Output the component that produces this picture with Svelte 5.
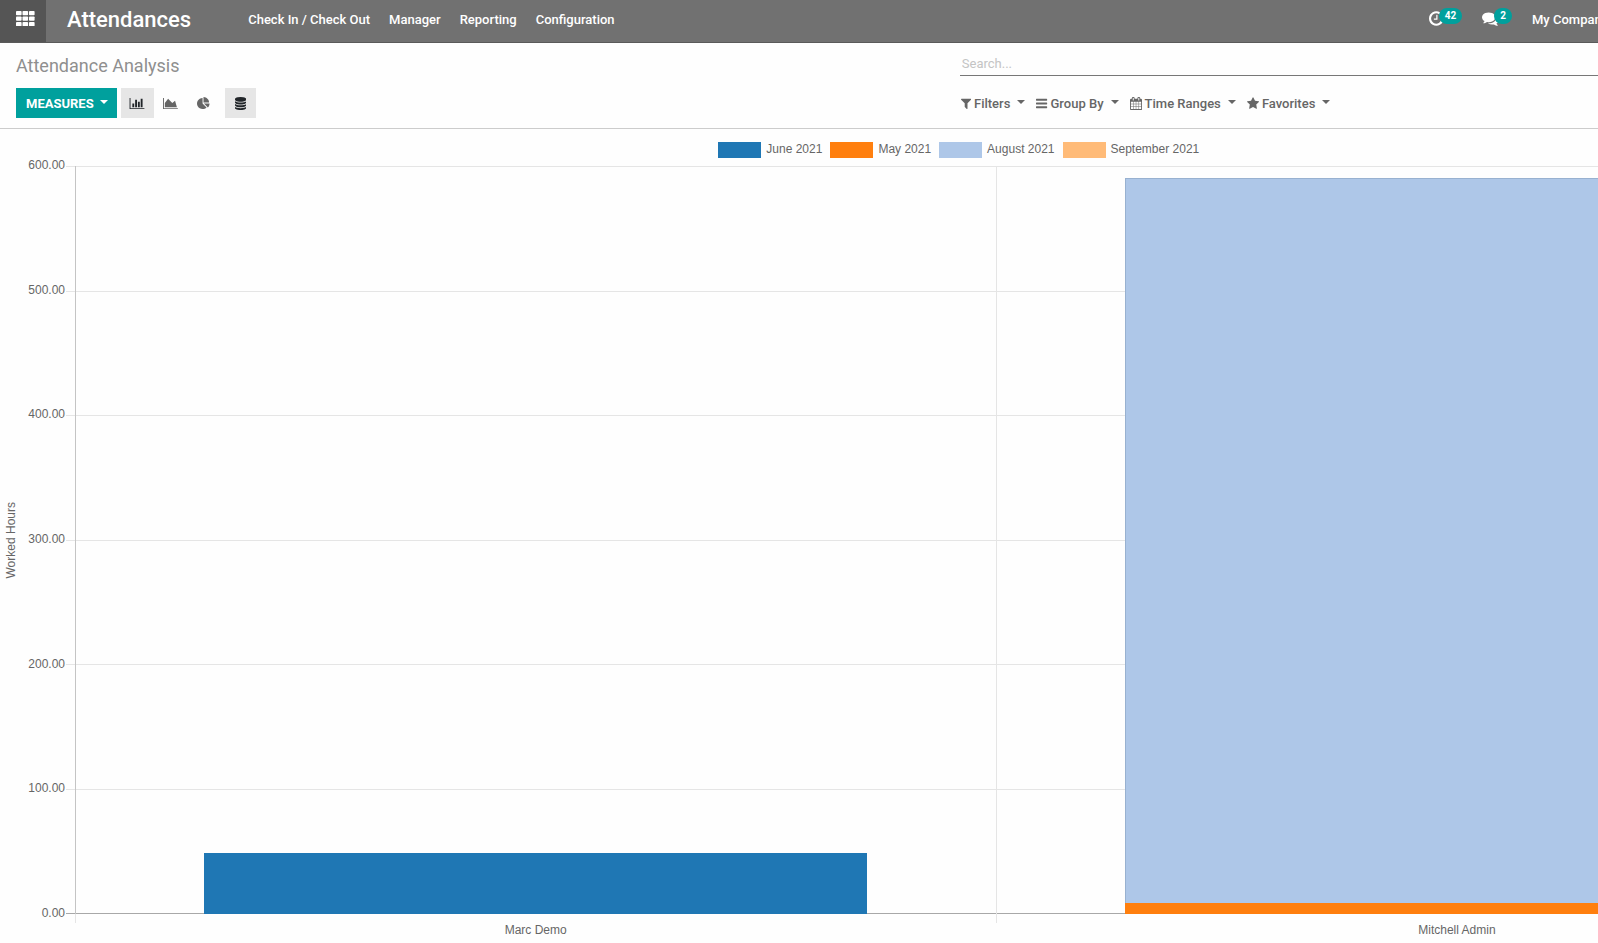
<script>
  const menus = ['Check In / Check Out', 'Manager', 'Reporting', 'Configuration'];

  const icons = {
    bar: {
      box: '0 0 2048 1792',
      d: 'M640 896v512h-256v-512h256zm384-512v1024h-256v-1024h256zm1024 1152v128h-2048v-1536h128v1408h1920zm-640-896v768h-256v-768h256zm384-384v1152h-256v-1152h256z'
    },
    area: {
      box: '0 0 2048 1792',
      d: 'M2048 1536v128h-2048v-1536h128v1408h1920zm-384-1024l256 896h-1664v-576l448-576 576 576z'
    },
    pie: {
      box: '0 0 1792 1792',
      d: 'M768 890l546 546q-106 108-247.500 168t-298.500 60q-209 0-385.500-103t-279.500-279.500-103-385.500 103-385.500 279.500-279.500 385.500-103v762zm187 6h773q0 157-60 298.500t-168 247.500zm709-128h-768v-768q209 0 385.500 103t279.500 279.500 103 385.500z'
    },
    database: {
      box: '128 0 1536 1792',
      d: 'M896 768q237 0 443-43t325-127v170q0 69-103 128t-280 93.500-385 34.500-385-34.500-280-93.500-103-128v-170q119 84 325 127t443 43zm0 768q237 0 443-43t325-127v170q0 69-103 128t-280 93.500-385 34.500-385-34.500-280-93.500-103-128v-170q119 84 325 127t443 43zm0-384q237 0 443-43t325-127v170q0 69-103 128t-280 93.500-385 34.500-385-34.500-280-93.500-103-128v-170q119 84 325 127t443 43zm0-1152q208 0 385 34.500t280 93.500 103 128v128q0 69-103 128t-280 93.500-385 34.500-385-34.500-280-93.500-103-128v-128q0-69 103-128t280-93.500 385-34.500z'
    },
    filter: {
      box: '192 0 1408 1792',
      d: 'M1595 295q17 41-14 70l-493 493v742q0 42-39 59-13 5-25 5-27 0-45-19l-256-256q-19-19-19-45v-486l-493-493q-31-29-14-70 17-39 59-39h1280q42 0 59 39z'
    },
    bars: {
      box: '128 0 1536 1792',
      d: 'M1664 1344v128q0 26-19 45t-45 19h-1408q-26 0-45-19t-19-45v-128q0-26 19-45t45-19h1408q26 0 45 19t19 45zm0-512v128q0 26-19 45t-45 19h-1408q-26 0-45-19t-19-45v-128q0-26 19-45t45-19h1408q26 0 45 19t19 45zm0-512v128q0 26-19 45t-45 19h-1408q-26 0-45-19t-19-45v-128q0-26 19-45t45-19h1408q26 0 45 19t19 45z'
    },
    calendar: {
      box: '64 0 1664 1792',
      d: 'M192 1664h288v-288h-288v288zm352 0h320v-288h-320v288zm-352-352h288v-320h-288v320zm352 0h320v-320h-320v320zm-352-384h288v-288h-288v288zm736 736h320v-288h-320v288zm-384-736h320v-288h-320v288zm768 736h288v-288h-288v288zm-384-352h320v-320h-320v320zm-352-864v-288q0-13-9.500-22.500t-22.500-9.500h-64q-13 0-22.500 9.500t-9.500 22.500v288q0 13 9.500 22.500t22.500 9.500h64q13 0 22.500-9.500t9.500-22.500zm736 864h288v-320h-288v320zm-384-384h320v-288h-320v288zm384 0h288v-288h-288v288zm32-480v-288q0-13-9.500-22.500t-22.500-9.500h-64q-13 0-22.500 9.500t-9.500 22.500v288q0 13 9.500 22.500t22.500 9.500h64q13 0 22.500-9.500t9.500-22.500zm384-64v1280q0 52-38 90t-90 38h-1408q-52 0-90-38t-38-90v-1280q0-52 38-90t90-38h128v-96q0-66 47-113t113-47h64q66 0 113 47t47 113v96h384v-96q0-66 47-113t113-47h64q66 0 113 47t47 113v96h128q52 0 90 38t38 90z'
    },
    star: {
      box: '64 0 1664 1792',
      d: 'M1728 647q0 22-26 48l-363 354 86 500q1 7 1 20 0 21-10.500 35.500t-30.500 14.500q-19 0-40-12l-449-236-449 236q-22 12-40 12-21 0-31.500-14.500t-10.500-35.500q0-6 2-20l86-500-364-354q-25-27-25-48 0-37 56-46l502-73 225-455q19-41 49-41t49 41l225 455 502 73q56 9 56 46z'
    },
    clock: {
      box: '128 0 1536 1792',
      d: 'M1024 544v448q0 14-9 23t-23 9h-320q-14 0-23-9t-9-23v-64q0-14 9-23t23-9h224v-352q0-14 9-23t23-9h64q14 0 23 9t9 23zm416 352q0-148-73-273t-198-198-273-73-273 73-198 198-73 273 73 273 198 198 273 73 273-73 198-198 73-273zm224 0q0 209-103 385.500t-279.500 279.500-385.500 103-385.500-103-279.500-279.500-103-385.500 103-385.500 279.500-279.500 385.500-103 385.500 103 279.500 279.500 103 385.500z'
    },
    comments: {
      box: '0 0 1792 1792',
      d: 'M1408 768q0 139-94 257t-256.500 186.500-353.500 68.500q-86 0-176-16-124 88-278 128-36 9-86 16h-3q-11 0-20.500-8t-11.500-21q-1-3-1-6.500t.5-6.500 2-6l2.500-5 3.500-5.500 4-5 4.500-5 4-4.500q5-6 23-25t26-29.500 22.500-29 25-38.500 20.500-44q-124-72-195-177t-71-224q0-139 94-257t256.500-186.500 353.500-68.500 353.500 68.500 256.500 186.500 94 257zm384 256q0 120-71 224.500t-195 176.500q10 24 20.500 44t25 38.500 22.500 29 26 29.500 23 25q1 1 4 4.500t4.500 5 4 5 3.500 5.500l2.500 5 2 6 .5 6.500-1 6.500q-3 14-13 22t-22 7q-50-7-86-16-154-40-278-128-90 16-176 16-271 0-472-132 58 4 88 4 161 0 309-45t264-129q125-92 192-212t67-254q0-77-23-152 129 71 204 178t75 230z'
    }
  };

  const modes = [
    { id: 'bar', label: 'Bar Chart' },
    { id: 'area', label: 'Line Chart' },
    { id: 'pie', label: 'Pie Chart' }
  ];

  const filters = [
    { icon: 'filter', label: 'Filters' },
    { icon: 'bars', label: 'Group By' },
    { icon: 'calendar', label: 'Time Ranges' },
    { icon: 'star', label: 'Favorites' }
  ];

  const series = [
    { key: 'june', label: 'June 2021' },
    { key: 'may', label: 'May 2021' },
    { key: 'august', label: 'August 2021' },
    { key: 'september', label: 'September 2021' }
  ];

  const maxHours = 600;
  const ticks = [600, 500, 400, 300, 200, 100, 0];

  // stacks are listed from top to bottom
  const employees = [
    { name: 'Marc Demo', stack: [{ key: 'june', hours: 49 }] },
    {
      name: 'Mitchell Admin',
      stack: [
        { key: 'august', hours: 581 },
        { key: 'may', hours: 9 }
      ]
    }
  ];

  let mode = $state('bar');
  let stacked = $state(true);
  let search = $state('');
</script>

{#snippet icon(name)}
  <svg class="icon {name}" viewBox={icons[name].box} aria-hidden="true">
    <path d={icons[name].d} />
  </svg>
{/snippet}

<div class="client">
  <header class="navbar">
    <button class="apps" aria-label="Applications">
      <svg viewBox="0 0 19 15" aria-hidden="true">
        {#each [0, 5.5, 11] as y}
          {#each [0, 6.5, 13] as x}
            <rect {x} {y} width="5.6" height="4.2" rx="0.8" />
          {/each}
        {/each}
      </svg>
    </button>
    <a class="brand" href="#attendances">Attendances</a>
    <nav class="menus">
      {#each menus as menu}
        <a href="#menu">{menu}</a>
      {/each}
    </nav>
    <div class="systray">
      <button class="tray" aria-label="Activities">
        {@render icon('clock')}
        <span class="badge">42</span>
      </button>
      <button class="tray" aria-label="Conversations">
        {@render icon('comments')}
        <span class="badge">2</span>
      </button>
      <button class="company">My Company</button>
    </div>
  </header>

  <div class="page">
    <section class="panel">
      <div class="left">
        <h1>Attendance Analysis</h1>
        <div class="buttons">
          <button class="measures">MEASURES <i class="caret"></i></button>
          <div class="modes">
            {#each modes as m}
              <button
                class="tool"
                class:active={mode === m.id}
                aria-label={m.label}
                onclick={() => (mode = m.id)}
              >
                {@render icon(m.id)}
              </button>
            {/each}
          </div>
          <button
            class="tool stacked"
            class:active={stacked}
            aria-label="Stacked"
            onclick={() => (stacked = !stacked)}
          >
            {@render icon('database')}
          </button>
        </div>
      </div>
      <div class="right">
        <input type="text" placeholder="Search..." aria-label="Search" bind:value={search} />
        <div class="filters">
          {#each filters as f}
            <button>
              {@render icon(f.icon)}
              <span>{f.label}</span>
              <i class="caret"></i>
            </button>
          {/each}
        </div>
      </div>
    </section>

    <section class="chart">
      <ul class="legend">
        {#each series as s}
          <li><span class="swatch {s.key}"></span>{s.label}</li>
        {/each}
      </ul>

      <div class="graph">
        <div class="axis-title"><span>Worked Hours</span></div>
        <div class="scale">
          {#each ticks as tick}
            <span>{tick.toFixed(2)}</span>
          {/each}
        </div>
        <div class="plot">
          <div class="lines">
            {#each ticks as tick}
              <span></span>
            {/each}
          </div>
          <div class="columns">
            {#each employees as employee}
              <div class="column">
                {#each employee.stack as part}
                  <div class="bar {part.key}" style="height: {(part.hours / maxHours) * 100}%"></div>
                {/each}
              </div>
            {/each}
          </div>
        </div>
      </div>

      <div class="names">
        {#each employees as employee}
          <div class="name">{employee.name}</div>
        {/each}
      </div>
    </section>
  </div>
</div>

<style>
  :global(body) {
    margin: 0;
    background: #fefefe;
  }

  .client {
    display: flex;
    flex-direction: column;
    height: 100vh;
    overflow: hidden;
    font-family: Roboto, 'Liberation Sans', sans-serif;
    font-size: 13px;
    color: #666;
  }

  button {
    margin: 0;
    padding: 0;
    border: 0;
    background: none;
    font: inherit;
    color: inherit;
    cursor: pointer;
  }

  a {
    color: inherit;
    text-decoration: none;
  }

  .icon {
    height: 13px;
    fill: currentColor;
    flex: none;
  }

  .caret {
    border-top: 4px solid;
    border-left: 4px solid transparent;
    border-right: 4px solid transparent;
  }

  /* top bar */
  .navbar {
    display: flex;
    flex: none;
    height: 42px;
    border-bottom: 1px solid #5a5a5a;
    background: #717171;
    color: #fff;
    font-weight: 500;
  }

  .apps {
    width: 46px;
    padding-bottom: 2px;
    padding-left: 4px;
    background: #555;
  }

  .apps svg {
    width: 19px;
    height: 15px;
    fill: #fff;
  }

  .brand {
    margin-left: 21px;
    font-size: 22px;
    line-height: 40px;
  }

  .menus {
    display: flex;
    gap: 19px;
    margin-left: 57px;
    line-height: 40px;
  }

  .systray {
    display: flex;
    align-items: flex-start;
    margin-left: auto;
    line-height: 40px;
  }

  .tray {
    display: flex;
    align-items: flex-start;
    margin-right: 20px;
  }

  .tray .icon {
    height: 17px;
    margin-top: 10px;
  }

  .badge {
    position: relative;
    height: 16px;
    margin-top: 8px;
    margin-left: -5px;
    padding: 0 6px;
    border-radius: 8px;
    background: #00a09d;
    font-size: 10px;
    font-weight: 700;
    line-height: 16px;
  }

  .company {
    width: 66px;
    overflow: hidden;
    line-height: 40px;
    text-align: left;
    white-space: nowrap;
  }

  /* the working area is wider than the window and runs off its right edge */
  .page {
    display: flex;
    flex: 1;
    flex-direction: column;
    width: 120%;
    min-height: 0;
  }

  .panel {
    display: flex;
    flex: none;
    border-bottom: 1px solid #ccc;
    padding-bottom: 10px;
  }

  .left,
  .right {
    width: 50%;
    box-sizing: border-box;
  }

  .left {
    padding-left: 16px;
  }

  h1 {
    margin: 11px 0;
    font-size: 18px;
    font-weight: 400;
    line-height: 23px;
    color: #8f8f8f;
  }

  .buttons {
    display: flex;
    height: 30px;
    gap: 4px;
  }

  .modes {
    display: flex;
    width: 100px;
  }

  .measures {
    display: flex;
    align-items: center;
    gap: 6px;
    padding: 0 9px 0 10px;
    background: #00a09d;
    color: #fff;
    font-weight: 700;
  }

  .measures .caret {
    margin-bottom: 3px;
  }

  .tool {
    display: flex;
    flex: 1;
    align-items: center;
    justify-content: center;
    color: #666;
  }

  .tool.active {
    background: #e6e6e6;
    color: #212529;
  }

  .tool.stacked {
    flex: none;
    width: 31px;
  }

  .right {
    padding-right: 16px;
    padding-left: 1px;
  }

  input {
    display: block;
    box-sizing: border-box;
    width: 100%;
    height: 24px;
    margin-top: 9px;
    padding: 0 2px;
    border: 0;
    border-bottom: 1px solid #777;
    outline: 0;
    background: none;
    font: inherit;
    color: #4c4c4c;
  }

  input::placeholder {
    color: #c4c4c4;
  }

  .filters {
    display: flex;
    gap: 11px;
    margin-top: 12px;
    padding-left: 1px;
    font-weight: 500;
  }

  .filters button {
    display: flex;
    align-items: center;
    height: 30px;
  }

  .filters span {
    margin-left: 3px;
  }

  .filters .caret {
    margin-bottom: 3px;
    margin-left: 7px;
  }

  /* chart */
  .chart {
    display: flex;
    flex: 1;
    flex-direction: column;
    min-height: 0;
    font-family: 'Liberation Sans', Arial, sans-serif;
    font-size: 12px;
    color: #666;
  }

  .legend {
    display: flex;
    justify-content: center;
    gap: 8px;
    margin: 13px 0 8px;
    padding: 0;
    list-style: none;
    line-height: 14px;
  }

  .legend li {
    display: flex;
    gap: 5px;
  }

  .swatch {
    width: 43px;
    height: 16px;
  }

  .june {
    background: #1f77b4;
  }

  .may {
    background: #ff7f0e;
  }

  .august {
    background: #aec7e8;
  }

  .september {
    background: #ffbb78;
  }

  .graph {
    display: flex;
    flex: 1;
    min-height: 0;
  }

  .axis-title {
    display: flex;
    align-items: center;
    justify-content: center;
    width: 22px;
  }

  .axis-title span {
    writing-mode: vertical-rl;
    transform: rotate(180deg);
  }

  .scale {
    display: flex;
    flex-direction: column;
    justify-content: space-between;
    width: 43px;
    margin: -8px 0 -6px;
    line-height: 14px;
    text-align: right;
  }

  .plot {
    position: relative;
    display: flex;
    flex: 1;
    margin-left: 1px;
    padding-left: 9px;
  }

  .lines {
    position: absolute;
    inset: 0;
    display: flex;
    flex-direction: column;
    justify-content: space-between;
  }

  .lines span {
    height: 1px;
    background: #e5e5e5;
  }

  .lines span:last-child {
    background: #a8a8a8;
  }

  .columns {
    position: relative;
    display: flex;
    flex: 1;
  }

  .column {
    display: flex;
    flex: 1;
    flex-direction: column;
    align-items: center;
    justify-content: flex-end;
    background: linear-gradient(#e5e5e5, #e5e5e5) no-repeat left top / 1px 100%;
  }

  .column:first-child {
    background-image: linear-gradient(#c4c4c4, #c4c4c4);
  }

  .bar {
    box-sizing: border-box;
    width: 72%;
  }

  .bar.august {
    border: 1px solid #98b1d0;
    border-bottom: 0;
  }

  .names {
    display: flex;
    height: 29px;
    margin-left: 75px;
  }

  .name {
    flex: 1;
    background: linear-gradient(#e5e5e5, #e5e5e5) no-repeat left top / 1px 9px;
    line-height: 32px;
    text-align: center;
  }
</style>
